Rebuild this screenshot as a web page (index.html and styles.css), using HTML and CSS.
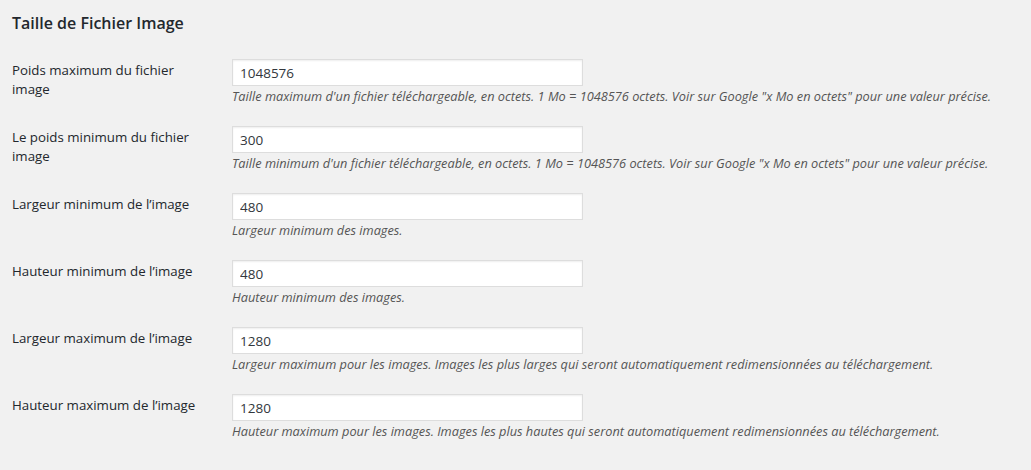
FILE: index.html
```html
<!DOCTYPE html>
<html lang="fr">

<head>
  <meta charset="UTF-8">
  <title>Taille de Fichier Image</title>
  <link rel="stylesheet" href="styles.css">
</head>

<body>
  <div class="wrap">
    <h2>Taille de Fichier Image</h2>

    <div class="form-table">
      <div class="row">
        <label for="max-size">Poids maximum du fichier image</label>
        <div class="field">
          <input type="text" id="max-size" value="1048576">
          <p class="description">Taille maximum d'un fichier téléchargeable, en octets. 1 Mo = 1048576 octets. Voir sur Google "x Mo en octets" pour une valeur précise.</p>
        </div>
      </div>

      <div class="row">
        <label for="min-size">Le poids minimum du fichier image</label>
        <div class="field">
          <input type="text" id="min-size" value="300">
          <p class="description">Taille minimum d'un fichier téléchargeable, en octets. 1 Mo = 1048576 octets. Voir sur Google "x Mo en octets" pour une valeur précise.</p>
        </div>
      </div>

      <div class="row">
        <label for="min-width">Largeur minimum de l’image</label>
        <div class="field">
          <input type="text" id="min-width" value="480">
          <p class="description">Largeur minimum des images.</p>
        </div>
      </div>

      <div class="row">
        <label for="min-height">Hauteur minimum de l’image</label>
        <div class="field">
          <input type="text" id="min-height" value="480">
          <p class="description">Hauteur minimum des images.</p>
        </div>
      </div>

      <div class="row">
        <label for="max-width">Largeur maximum de l’image</label>
        <div class="field">
          <input type="text" id="max-width" value="1280">
          <p class="description">Largeur maximum pour les images. Images les plus larges qui seront automatiquement redimensionnées au téléchargement.</p>
        </div>
      </div>

      <div class="row">
        <label for="max-height">Hauteur maximum de l’image</label>
        <div class="field">
          <input type="text" id="max-height" value="1280">
          <p class="description">Hauteur maximum pour les images. Images les plus hautes qui seront automatiquement redimensionnées au téléchargement.</p>
        </div>
      </div>
    </div>
  </div>
</body>

</html>
```

FILE: styles.css
```css
body {
  margin: 0;
  background: #f1f1f1;
  color: #23282d;
  font-family: "Open Sans", "Noto Sans", sans-serif;
  font-size: 13px;
}

.wrap {
  padding: 0 12px;
}

h2 {
  font-size: 16px;
  font-weight: 600;
  line-height: 22px;
  margin: 0;
  padding-top: 12px;
  height: 37px;
}

.row {
  display: grid;
  grid-template-columns: 220px 1fr;
  padding: 10px 0 11px;
}

.row label {
  font-size: 13.3px;
  line-height: 19px;
  padding-top: 2px;
  width: 195px;
}

.field input {
  display: block;
  box-sizing: border-box;
  width: 351px;
  height: 27px;
  margin: 0;
  padding: 0 7px;
  border: 1px solid #ddd;
  box-shadow: inset 0 1px 2px rgba(0, 0, 0, .07);
  background: #fff;
  color: #32373c;
  font-family: inherit;
  font-size: 13.5px;
}

.description {
  margin: 2px 0 0;
  font-size: 12.75px;
  line-height: 17px;
  font-style: italic;
  color: #555;
}
```
